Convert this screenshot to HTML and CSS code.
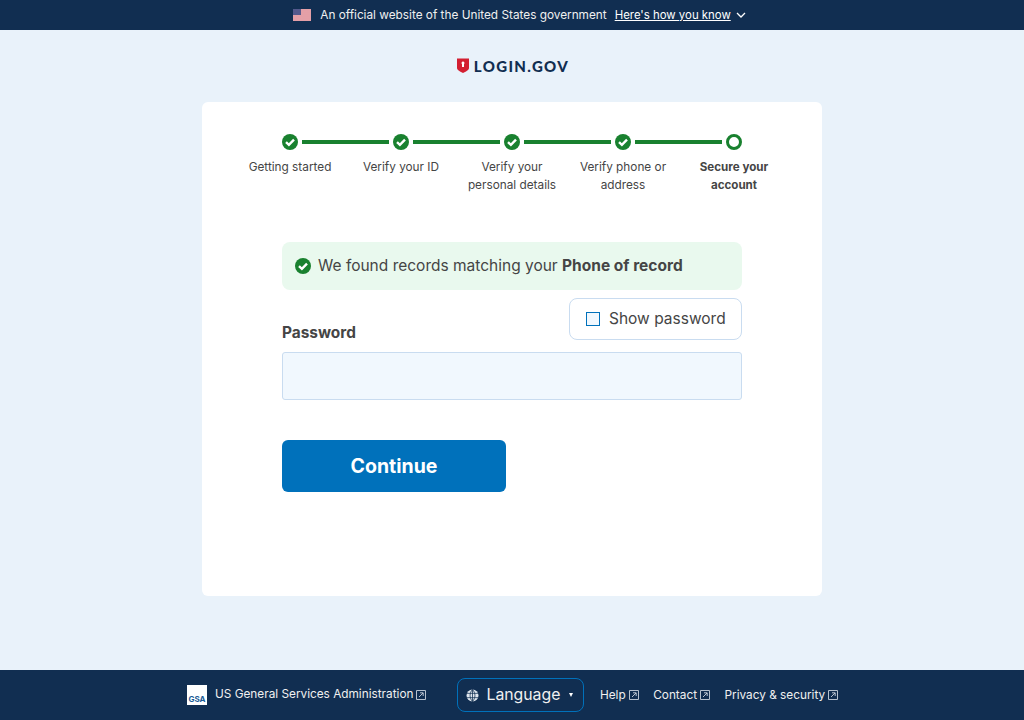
FILE: index.html
```html
<!DOCTYPE html>
<html>
  <head>
    <meta charset="utf-8">
    <title>Login.gov</title>
    <link rel="stylesheet" href="styles.css">
  </head>
  <body>
    <div class="banner">
      <svg class="flag" width="18" height="12" viewBox="0 0 18 12">
        <rect width="18" height="12" fill="#efdfe2"/>
        <path d="M0 1h18M0 3h18M0 5h18M0 7h18M0 9h18M0 11h18" stroke="#d9606c" stroke-width="1"/>
        <rect width="8" height="6" fill="#54598c"/>
      </svg>
      <span class="banner-text">An official website of the United States government</span>
      <a class="banner-link" href="#">Here's how you know</a>
      <svg class="chevron" width="10" height="6" viewBox="0 0 10 6">
        <path d="M1 1l4 4 4-4" fill="none" stroke="#fff" stroke-width="1.3"/>
      </svg>
    </div>

    <div class="main">
      <div class="logo">
        <svg width="12" height="15" viewBox="0 0 12 15">
          <path d="M0 0.5h12v9.5c0 2-3.500 3.800-6 5-2.500-1.200-6-3-6-5z" fill="#d31f31"/>
          <path d="M6 3.500a1.500 1.500 0 0 1 1 2.600v3h-2v-3a1.500 1.500 0 0 1 1-2.600z" fill="#fff"/>
        </svg>
        <span class="logo-text">LOGIN.GOV</span>
      </div>

      <div class="card">
        <div class="steps">
          <div class="step">
            <div class="rail rail-first">
              <span class="line"></span>
              <svg class="dot" viewBox="0 0 16 16"><circle cx="8" cy="8" r="8" fill="#19812f"/><path d="M4 8.200l2.900 2.700 5.100-5.200" fill="none" stroke="#fff" stroke-width="2.400"/></svg>
              <span class="line"></span>
            </div>
            <div class="step-label">Getting started</div>
          </div>
          <div class="step">
            <div class="rail">
              <span class="line"></span>
              <svg class="dot" viewBox="0 0 16 16"><circle cx="8" cy="8" r="8" fill="#19812f"/><path d="M4 8.200l2.900 2.700 5.100-5.200" fill="none" stroke="#fff" stroke-width="2.400"/></svg>
              <span class="line"></span>
            </div>
            <div class="step-label">Verify your ID</div>
          </div>
          <div class="step">
            <div class="rail">
              <span class="line"></span>
              <svg class="dot" viewBox="0 0 16 16"><circle cx="8" cy="8" r="8" fill="#19812f"/><path d="M4 8.200l2.900 2.700 5.100-5.200" fill="none" stroke="#fff" stroke-width="2.400"/></svg>
              <span class="line"></span>
            </div>
            <div class="step-label">Verify your<br>personal details</div>
          </div>
          <div class="step">
            <div class="rail">
              <span class="line"></span>
              <svg class="dot" viewBox="0 0 16 16"><circle cx="8" cy="8" r="8" fill="#19812f"/><path d="M4 8.200l2.900 2.700 5.100-5.200" fill="none" stroke="#fff" stroke-width="2.400"/></svg>
              <span class="line"></span>
            </div>
            <div class="step-label">Verify phone or<br>address</div>
          </div>
          <div class="step step-current">
            <div class="rail rail-last">
              <span class="line"></span>
              <span class="dot dot-open"></span>
              <span class="line"></span>
            </div>
            <div class="step-label">Secure your<br>account</div>
          </div>
        </div>

        <div class="content">
          <div class="alert">
            <svg class="alert-icon" viewBox="0 0 16 16"><circle cx="8" cy="8" r="8" fill="#19812f"/><path d="M4 8.200l2.900 2.700 5.100-5.200" fill="none" stroke="#fff" stroke-width="2.400"/></svg>
            <span class="alert-text">We found records matching your <b>Phone of record</b></span>
          </div>
          <div class="field-head">
            <label class="field-label">Password</label>
            <div class="show-password">
              <span class="checkbox"></span>
              <span class="show-text">Show password</span>
            </div>
          </div>
          <div class="input"></div>
          <button class="btn-primary">Continue</button>
        </div>
      </div>
    </div>

    <div class="footer">
      <div class="gsa">
        <span class="gsa-logo">GSA</span>
        <span class="gsa-name">US General Services Administration</span>
        <svg class="ext ext-gsa" viewBox="0 0 10 10"><path d="M0.500 0.500h9v9h-9zM3 7l4-4M4 2.800h3.200v3.200" fill="none" stroke="#c9d3de" stroke-width="0.900"/></svg>
      </div>
      <div class="lang">
        <svg class="globe" viewBox="0 0 12 12">
          <circle cx="6" cy="6" r="5.500" fill="#dfe6ee"/>
          <path d="M0.500 4h11M0.500 8h11M6 0.500v11M6 0.500c-3 3-3 8 0 11M6 0.500c3 3 3 8 0 11" fill="none" stroke="#112e51" stroke-width="0.700"/>
        </svg>
        <span class="lang-text">Language</span>
        <span class="caret"></span>
      </div>
      <div class="foot-links">
        <span class="foot-link">Help<svg class="ext" viewBox="0 0 10 10"><path d="M0.500 0.500h9v9h-9zM3 7l4-4M4 2.800h3.200v3.200" fill="none" stroke="#c9d3de" stroke-width="0.900"/></svg></span>
        <span class="foot-link">Contact<svg class="ext" viewBox="0 0 10 10"><path d="M0.500 0.500h9v9h-9zM3 7l4-4M4 2.800h3.200v3.200" fill="none" stroke="#c9d3de" stroke-width="0.900"/></svg></span>
        <span class="foot-link">Privacy &amp; security<svg class="ext" viewBox="0 0 10 10"><path d="M0.500 0.500h9v9h-9zM3 7l4-4M4 2.800h3.200v3.200" fill="none" stroke="#c9d3de" stroke-width="0.900"/></svg></span>
      </div>
    </div>
  </body>
</html>
```

FILE: styles.css
```css
* {
  box-sizing: border-box;
}
body {
  margin: 0;
  min-height: 720px;
  display: flex;
  flex-direction: column;
  background: #e9f2fa;
  font-family: "Inter", "Liberation Sans", sans-serif;
  color: #454545;
}

.banner {
  height: 30px;
  flex: none;
  display: flex;
  align-items: center;
  justify-content: center;
  padding-left: 15px;
  background: #112e51;
  color: #f0f0f0;
  font-size: 11.800px;
}
.flag {
  margin-right: 9px;
}
.banner-link {
  color: #fff;
  margin-left: 8px;
  font-size: 11.400px;
}
.chevron {
  margin-left: 5px;
}

.main {
  flex: 1;
  display: flex;
  flex-direction: column;
  align-items: center;
}
.logo {
  height: 72px;
  padding-bottom: 1px;
  margin-left: 2px;
  display: flex;
  align-items: center;
  gap: 5px;
}
.logo-text {
  font-family: "Lato", "Liberation Sans", sans-serif;
  font-weight: 900;
  font-size: 15px;
  letter-spacing: 1.350px;
  color: #112e51;
}

.card {
  width: 620px;
  height: 494px;
  background: #fff;
  border-radius: 6px;
  padding-top: 32px;
}
.steps {
  width: 555px;
  margin: 0 auto;
  display: flex;
}
.step {
  width: 111px;
}
.rail {
  height: 16px;
  display: flex;
  align-items: center;
  gap: 4px;
}
.line {
  flex: 1;
  height: 4px;
  background: #19812f;
}
.rail-first .line:first-child,
.rail-last .line:last-child {
  visibility: hidden;
}
.dot {
  width: 16px;
  height: 16px;
  flex: none;
}
.dot-open {
  border: 3px solid #19812f;
  border-radius: 50%;
}
.step-label {
  margin-top: 8px;
  text-align: center;
  font-size: 11.800px;
  line-height: 18px;
}
.step-current .step-label {
  font-size: 11.600px;
  font-weight: 700;
}

.content {
  width: 460px;
  margin: 48px auto 0;
}
.alert {
  height: 48px;
  display: flex;
  align-items: center;
  gap: 7px;
  padding-left: 13px;
  background: #e9f9ee;
  border-radius: 8px;
  font-size: 15.500px;
}
.alert-icon {
  width: 16px;
  height: 16px;
}
.alert-text {
  margin-bottom: 2px;
}
.field-head {
  display: flex;
  justify-content: space-between;
  align-items: flex-end;
  margin-top: 8px;
}
.field-label {
  font-size: 15.400px;
  font-weight: 700;
  line-height: 14px;
}
.show-password {
  width: 173px;
  height: 42px;
  display: flex;
  align-items: center;
  gap: 9px;
  padding-left: 16px;
  background: #fff;
  border: 1px solid #c9dcf0;
  border-radius: 8px;
  font-size: 15.500px;
}
.show-text {
  margin-bottom: 2px;
}
.checkbox {
  width: 14px;
  height: 14px;
  background: #f1f8fe;
  border: 1px solid #0071bb;
}
.input {
  height: 48px;
  margin-top: 12px;
  background: #f1f8fe;
  border: 1px solid #c9dcf0;
  border-radius: 3px;
}
.btn-primary {
  display: block;
  width: 224px;
  height: 52px;
  margin-top: 40px;
  border: 0;
  border-radius: 6px;
  background: #0071bb;
  color: #fff;
  font-family: inherit;
  font-size: 19.500px;
  font-weight: 700;
}

.footer {
  height: 50px;
  flex: none;
  display: flex;
  align-items: center;
  padding-left: 187px;
  background: #112e51;
  color: #f0f0f0;
  font-size: 11.800px;
}
.gsa {
  display: flex;
  align-items: center;
}
.gsa-logo {
  width: 20px;
  height: 20px;
  margin-right: 8px;
  padding-top: 8px;
  background: #fff;
  color: #1a5a96;
  font-size: 8px;
  font-weight: 700;
  line-height: 12px;
  text-align: center;
}
.gsa-name {
  margin-bottom: 2px;
}
.ext {
  width: 10px;
  height: 10px;
  margin-left: 3px;
  vertical-align: -1px;
}
.lang {
  width: 127px;
  height: 34px;
  display: flex;
  align-items: center;
  margin-left: 31px;
  padding-left: 8px;
  border: 1px solid #0071bb;
  border-radius: 8px;
}
.globe {
  width: 13px;
  height: 13px;
}
.lang-text {
  margin-left: 7px;
  margin-bottom: 2px;
  font-size: 15.800px;
}
.caret {
  margin-left: 9px;
  border-left: 2.500px solid transparent;
  border-right: 2.500px solid transparent;
  border-top: 4px solid #fff;
}
.foot-links {
  display: flex;
  gap: 14.500px;
  margin-left: 15.500px;
}
```
